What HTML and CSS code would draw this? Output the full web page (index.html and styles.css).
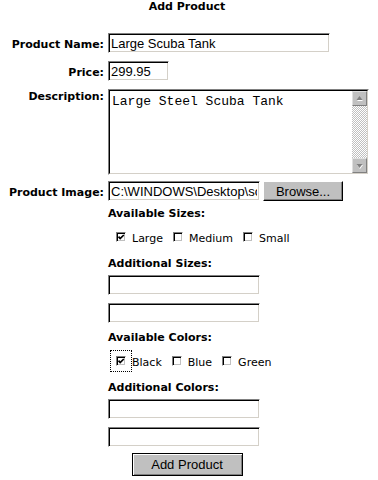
FILE: index.html
```html
<!DOCTYPE html>
<html lang="en">
<head>
  <meta charset="UTF-8">
  <title>Add Product</title>
  <link rel="stylesheet" href="styles.css">
</head>
<body>
  <div class="page">
    <h1 class="titulo">Add Product</h1>

    <div class="linha">
      <label class="rotulo" for="nome">Product Name:</label>
      <input class="campo campo-nome" type="text" id="nome" value="Large Scuba Tank">
    </div>

    <div class="linha">
      <label class="rotulo" for="preco">Price:</label>
      <input class="campo campo-preco" type="text" id="preco" value="299.95">
    </div>

    <div class="linha linha-topo">
      <label class="rotulo" for="descricao">Description:</label>
      <div class="memo">
        <div class="memo-interno">
          <textarea id="descricao">Large Steel Scuba Tank</textarea>
          <div class="rolagem">
            <span class="rolagem-botao">
              <svg width="13" height="13" viewBox="0 0 13 13"><polygon points="7,6 10,9 4,9" fill="#fff"/><polygon points="6.5,4 9.5,8 3.5,8" fill="#808080"/></svg>
            </span>
            <span class="rolagem-trilho"></span>
            <span class="rolagem-botao">
              <svg width="13" height="13" viewBox="0 0 13 13"><polygon points="4,6 10,6 7,10" fill="#fff"/><polygon points="3.5,5 9.5,5 6.5,9" fill="#808080"/></svg>
            </span>
          </div>
        </div>
      </div>
    </div>

    <div class="linha linha-arquivo">
      <label class="rotulo" for="imagem">Product Image:</label>
      <input class="campo campo-arquivo" type="text" id="imagem" value="C:\WINDOWS\Desktop\scuba.jpg">
      <button class="botao botao-browse">Browse...</button>
    </div>

    <div class="opcoes">
      <div class="grupo grupo-primeiro">Available Sizes:</div>
      <div class="marcas">
        <label class="marca"><span class="caixa"><svg viewBox="0 0 10 10"><polyline points="2.5,4.6 4.2,6.6 7.8,3" fill="none" stroke="#000" stroke-width="1.7"/></svg></span>Large</label>
        <label class="marca"><span class="caixa"></span>Medium</label>
        <label class="marca"><span class="caixa"></span>Small</label>
      </div>

      <div class="grupo">Additional Sizes:</div>
      <input class="campo campo-extra" type="text">
      <input class="campo campo-extra" type="text">

      <div class="grupo">Available Colors:</div>
      <div class="marcas">
        <label class="marca"><span class="caixa caixa-foco"><svg viewBox="0 0 10 10"><polyline points="2.5,4.6 4.2,6.6 7.8,3" fill="none" stroke="#000" stroke-width="1.7"/></svg></span>Black</label>
        <label class="marca"><span class="caixa"></span>Blue</label>
        <label class="marca"><span class="caixa"></span>Green</label>
      </div>

      <div class="grupo">Additional Colors:</div>
      <input class="campo campo-extra" type="text">
      <input class="campo campo-extra" type="text">
    </div>

    <div class="acoes">
      <button class="botao botao-enviar">Add Product</button>
    </div>
  </div>
</body>
</html>
```

FILE: styles.css
```css
body {
  margin: 0;
  background: #fff;
  color: #000;
  font-family: 'DejaVu Sans', Verdana, sans-serif;
  font-size: 11px;
}

.page {
  width: 358px;
  margin-left: 8px;
}

.titulo {
  margin: 0;
  font-size: 11px;
  line-height: 13px;
  font-weight: bold;
  text-align: center;
}

.linha {
  display: flex;
  align-items: baseline;
  margin-top: 8px;
}

.titulo + .linha {
  margin-top: 20px;
}

.linha-topo {
  align-items: flex-start;
}

.linha-topo .rotulo {
  padding-top: 1px;
}

.linha-arquivo {
  margin-top: 6px;
}

.rotulo {
  width: 96px;
  flex-shrink: 0;
  margin-right: 4px;
  text-align: right;
  white-space: nowrap;
  font-weight: bold;
  line-height: 13px;
}

.campo {
  display: block;
  flex-shrink: 0;
  height: 20px;
  margin: 0;
  padding: 0 2px;
  box-sizing: border-box;
  border: 1px solid;
  border-color: #808080 #fff #fff #808080;
  box-shadow: inset 1px 1px 0 #000, inset -1px -1px 0 #d4d0c8;
  font-family: 'Liberation Sans', Arial, sans-serif;
  font-size: 13px;
  color: #000;
  background: #fff;
  outline: none;
}

.campo-nome {
  width: 222px;
}

.campo-preco {
  width: 61px;
}

.campo-arquivo {
  width: 152px;
}

.campo-extra {
  width: 152px;
  margin-top: 8px;
}

.grupo + .campo-extra {
  margin-top: 5px;
}

.memo {
  width: 261px;
  height: 86px;
  flex-shrink: 0;
  box-sizing: border-box;
  border: 1px solid;
  border-color: #808080 #fff #fff #808080;
}

.memo-interno {
  display: flex;
  height: 100%;
  box-sizing: border-box;
  border: 1px solid;
  border-color: #000 #d4d0c8 #d4d0c8 #000;
}

.memo textarea {
  flex: 1;
  margin: 0;
  padding: 3px 2px;
  border: none;
  resize: none;
  overflow: hidden;
  outline: none;
  font-family: 'Liberation Mono', 'Courier New', monospace;
  font-size: 13px;
  line-height: 15px;
  color: #000;
}

.rolagem {
  display: flex;
  flex-direction: column;
  width: 15px;
}

.rolagem-botao {
  display: block;
  height: 15px;
  box-sizing: border-box;
  background: #c0c0c0;
  border: 1px solid;
  border-color: #dfdfdf #808080 #808080 #dfdfdf;
}

.rolagem-botao svg {
  display: block;
}

.rolagem-trilho {
  flex: 1;
  background-color: #fff;
  background-image: repeating-conic-gradient(#c0c0c0 0 25%, #fff 0 50%);
  background-size: 2px 2px;
}

.botao {
  margin: 0;
  padding: 0;
  box-sizing: border-box;
  background: #c0c0c0;
  border: 1px solid;
  border-color: #fff #000 #000 #fff;
  box-shadow: inset -1px -1px 0 #808080;
  font-family: 'Liberation Sans', Arial, sans-serif;
  font-size: 13px;
  color: #000;
}

.botao-browse {
  width: 80px;
  height: 20px;
  margin-left: 3px;
}

.opcoes {
  display: flex;
  flex-direction: column;
  align-items: flex-start;
  margin-left: 100px;
}

.grupo {
  font-weight: bold;
  line-height: 13px;
  margin-top: 8px;
}

.grupo-primeiro {
  margin-top: 6px;
}

.marcas + .grupo {
  margin-top: 12px;
}

.marcas {
  display: flex;
  align-items: baseline;
  gap: 10px;
  height: 13px;
  margin-top: 12px;
  padding-left: 8px;
  line-height: 13px;
}

.marca {
  display: flex;
  align-items: baseline;
  gap: 6px;
}

.caixa {
  display: inline-block;
  width: 10px;
  height: 10px;
  box-sizing: border-box;
  border: 1px solid;
  border-color: #808080 #fff #fff #808080;
  box-shadow: inset 1px 1px 0 #000, inset -1px -1px 0 #c0c0c0;
  background: #fff;
}

.caixa svg {
  display: block;
  width: 10px;
  height: 10px;
  margin: -1px;
}

.caixa-foco {
  outline: 1px dotted #000;
  outline-offset: 5px;
}

.acoes {
  display: flex;
  justify-content: center;
  margin-top: 6px;
}

.botao-enviar {
  width: 111px;
  height: 23px;
  border: 1px solid #000;
  box-shadow: inset 1px 1px 0 #fff, inset -1px -1px 0 #808080;
}
```
